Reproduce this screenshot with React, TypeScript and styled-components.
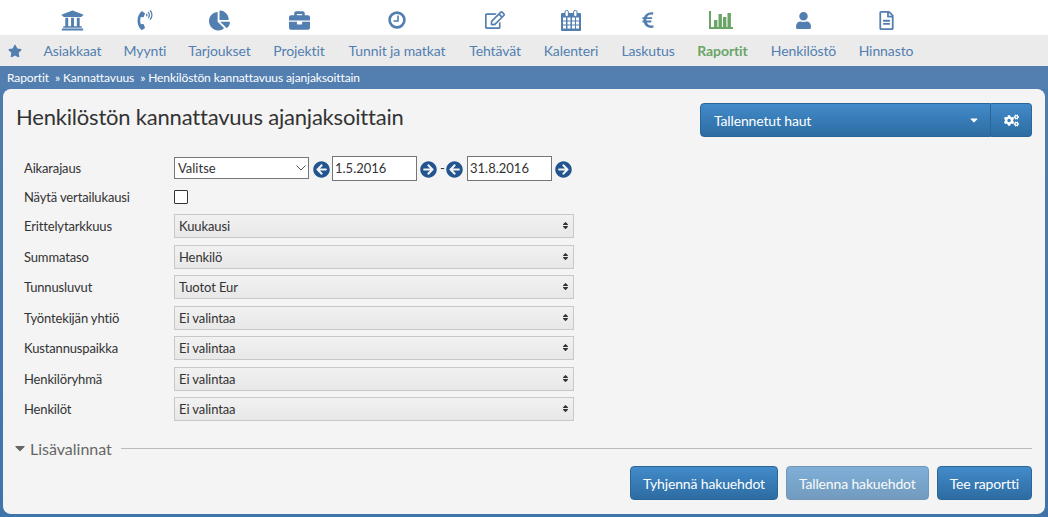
import React from "react";
import styled, { createGlobalStyle } from "styled-components";
import {
  FaUniversity,
  FaPhoneVolume,
  FaChartPie,
  FaBriefcase,
  FaRegEdit,
  FaEuroSign,
  FaUser,
  FaRegFileAlt,
  FaStar,
  FaCogs,
  FaArrowCircleLeft,
  FaArrowCircleRight,
  FaSortUp,
  FaSortDown,
  FaCaretDown,
} from "react-icons/fa";

const FONT = `"Lato", "Noto Sans", sans-serif`;

const GlobalStyle = createGlobalStyle`
  html, body {
    margin: 0;
    padding: 0;
    background: #4f7fb2;
    font-family: ${FONT};
    overflow: hidden;
  }
  * {
    box-sizing: border-box;
  }
`;

const Page = styled.div`
  width: 1048px;
  height: 517px;
  display: flex;
  flex-direction: column;
  background: linear-gradient(#527eb0, #3f74aa);
`;

const Nav = styled.nav`
  display: flex;
  height: 66px;
  background: #fff;
`;

const StarCell = styled.div`
  width: 32px;
  display: flex;
  flex-direction: column;
  justify-content: flex-end;
`;

const StarBox = styled.div`
  height: 31px;
  background: #ebebeb;
  color: #527eb0;
  font-size: 14px;
  display: flex;
  align-items: center;
  padding-left: 8px;
`;

const NavItem = styled.a<{ $width: number }>`
  width: ${(props) => props.$width}px;
  display: flex;
  flex-direction: column;
  align-items: stretch;
  color: #527eb0;
`;

const NavIcon = styled.div<{ $size?: number }>`
  height: 35px;
  display: flex;
  align-items: center;
  justify-content: center;
  font-size: ${(props) => props.$size ?? 21}px;
  padding-top: 5px;
`;

const NavLabel = styled.div<{ $active?: boolean }>`
  height: 31px;
  background: #ebebeb;
  display: flex;
  align-items: center;
  justify-content: center;
  font-size: 14px;
  letter-spacing: -0.1px;
  white-space: nowrap;
  font-weight: ${(props) => (props.$active ? 700 : 400)};
  color: ${(props) => (props.$active ? "#6aa568" : "#527eb0")};
`;

const NavFiller = styled.div`
  flex: 1;
  margin-top: 35px;
  background: #ebebeb;
`;

const Breadcrumb = styled.div`
  height: 23px;
  background: #527eb0;
  color: #fff;
  font-size: 12px;
  letter-spacing: -0.1px;
  display: flex;
  align-items: center;
  padding-left: 7px;
  white-space: nowrap;
`;

const Crumb = styled.span`
  margin-right: 6px;
`;

const Panel = styled.main`
  flex: none;
  height: 425px;
  margin: 0 3px;
  background: #f4f4f4;
  border-radius: 8px;
  padding: 0 13px;
  display: flex;
  flex-direction: column;
`;

const Header = styled.div`
  display: flex;
  justify-content: space-between;
  align-items: flex-start;
  height: 66px;
  padding-top: 14px;
`;

const Title = styled.h1`
  margin: -1px 0 0;
  font-size: 22px;
  font-weight: 400;
  line-height: 30px;
  letter-spacing: -0.2px;
  color: #333;
`;

const SavedSearches = styled.div`
  display: flex;
  width: 332px;
  height: 34px;
`;

const BlueButton = styled.button<{ $disabled?: boolean }>`
  height: 34px;
  padding: 0 12px;
  border: 1px solid #2b6699;
  border-radius: 4px;
  background: linear-gradient(#428bca, #2d6ca2);
  color: #fff;
  font-family: ${FONT};
  font-size: 14px;
  letter-spacing: -0.15px;
  opacity: ${(props) => (props.$disabled ? 0.65 : 1)};
  display: flex;
  align-items: center;
`;

const SavedMain = styled(BlueButton)`
  flex: 1;
  justify-content: space-between;
  border-radius: 4px 0 0 4px;
  padding: 0 13px;
`;

const SavedGear = styled(BlueButton)`
  width: 41px;
  justify-content: center;
  border-left: none;
  border-radius: 0 4px 4px 0;
  font-size: 15px;
  padding: 0;
`;

const Form = styled.div`
  padding-left: 8px;
  display: flex;
  flex-direction: column;
`;

const Row = styled.div<{ $height: number; $top?: number }>`
  display: flex;
  align-items: center;
  height: ${(props) => props.$height}px;
  padding-top: ${(props) => props.$top ?? 0}px;
`;

const Label = styled.label`
  width: 150px;
  flex: none;
  font-size: 13px;
  letter-spacing: -0.15px;
  color: #333;
`;

const SelectWrap = styled.div`
  position: relative;
  width: 135px;
  height: 22px;
  margin-top: -1px;
  svg {
    position: absolute;
    right: 3px;
    top: 8px;
    pointer-events: none;
  }
`;

const PlainSelect = styled.select`
  width: 100%;
  height: 100%;
  appearance: none;
  border: 1px solid #767676;
  border-radius: 0;
  background: #fff;
  font-family: ${FONT};
  font-size: 13px;
  color: #333;
  padding: 0 0 0 3px;
`;

const DateInput = styled.input`
  width: 85px;
  height: 25px;
  border: 1px solid #767676;
  background: #fff;
  font-family: ${FONT};
  font-size: 13px;
  color: #333;
  padding: 0 2px;
`;

const ArrowBtn = styled.span<{ $left: number; $right: number }>`
  display: inline-flex;
  color: #22558f;
  font-size: 17px;
  margin: 0 ${(props) => props.$right}px 0 ${(props) => props.$left}px;
  padding-top: 3px;
`;

const Dash = styled.span`
  font-size: 13px;
  color: #333;
  width: 2px;
`;

const Check = styled.input`
  width: 14px;
  height: 14px;
  margin: 0;
  appearance: none;
  border: 1px solid #333;
  background: #fff;
  border-radius: 1px;
`;

const FancySelect = styled.div`
  width: 400px;
  height: 24px;
  border: 1px solid #c8c8c8;
  background: linear-gradient(#f1f1f1, #e8e8e8);
  font-size: 13px;
  letter-spacing: -0.1px;
  color: #333;
  display: flex;
  align-items: center;
  justify-content: space-between;
  padding: 0 5px 0 4px;
`;

const SortMark = styled.span`
  position: relative;
  width: 7px;
  height: 10px;
  font-size: 9px;
  color: #333;
  svg {
    position: absolute;
    left: 0;
    top: 0;
  }
`;

const Divider = styled.div`
  display: flex;
  align-items: center;
  margin: 11.5px 0 0 -4px;
  height: 24px;
  color: #666;
  font-size: 16px;
`;

const DividerText = styled.span`
  display: flex;
  align-items: center;
  gap: 2px;
  margin-right: 9px;
`;

const DividerLine = styled.div`
  flex: 1;
  height: 1px;
  background: #bbb;
`;

const Actions = styled.div`
  display: flex;
  justify-content: flex-end;
  gap: 8px;
  margin-top: 6px;
`;

function ClockIcon() {
  return (
    <svg width="18" height="18" viewBox="0 0 18 18">
      <circle cx="9" cy="9" r="7.4" fill="none" stroke="#527eb0" strokeWidth="2.6" />
      <path d="M10 4.5V10H5.5" fill="none" stroke="#527eb0" strokeWidth="1.6" />
    </svg>
  );
}

function CalendarIcon() {
  const cols = [2, 6.5, 11, 15];
  const rowsY = [7.5, 11.5, 15.5];
  return (
    <svg width="20" height="21" viewBox="0 0 20 21">
      <rect x="0" y="3" width="20" height="18" rx="1" fill="#527eb0" />
      <rect x="4" y="0.5" width="3.4" height="6" rx="1.4" fill="#fff" stroke="#527eb0" />
      <rect x="12.6" y="0.5" width="3.4" height="6" rx="1.4" fill="#fff" stroke="#527eb0" />
      {rowsY.map((y) =>
        cols.map((x) => (
          <rect key={`${x}-${y}`} x={x} y={y} width="3" height="3" fill="#fff" />
        ))
      )}
    </svg>
  );
}

function BarsIcon() {
  return (
    <svg width="24" height="18" viewBox="0 0 24 18" style={{ marginLeft: -3 }}>
      <path d="M1 0v17h23" fill="none" stroke="#6aa568" strokeWidth="2" />
      <rect x="5" y="9" width="3.4" height="7" fill="#6aa568" />
      <rect x="9.5" y="3" width="3.4" height="13" fill="#6aa568" />
      <rect x="14" y="6" width="3.4" height="10" fill="#6aa568" />
      <rect x="18.5" y="2" width="3.4" height="14" fill="#6aa568" />
    </svg>
  );
}

const navItems = [
  { label: "Asiakkaat", width: 81, icon: <FaUniversity />, size: 23 },
  { label: "Myynti", width: 64, icon: <FaPhoneVolume />, size: 20 },
  { label: "Tarjoukset", width: 85, icon: <FaChartPie />, size: 21 },
  { label: "Projektit", width: 74, icon: <FaBriefcase />, size: 21 },
  { label: "Tunnit ja matkat", width: 122, icon: <ClockIcon /> },
  { label: "Tehtävät", width: 74, icon: <FaRegEdit />, size: 20 },
  { label: "Kalenteri", width: 78, icon: <CalendarIcon /> },
  { label: "Laskutus", width: 76, icon: <FaEuroSign />, size: 18 },
  { label: "Raportit", width: 73, icon: <BarsIcon />, active: true },
  { label: "Henkilöstö", width: 89, icon: <FaUser />, size: 17 },
  { label: "Hinnasto", width: 76, icon: <FaRegFileAlt />, size: 19 },
];

const rows = [
  { label: "Erittelytarkkuus", value: "Kuukausi" },
  { label: "Summataso", value: "Henkilö" },
  { label: "Tunnusluvut", value: "Tuotot Eur" },
  { label: "Työntekijän yhtiö", value: "Ei valintaa" },
  { label: "Kustannuspaikka", value: "Ei valintaa" },
  { label: "Henkilöryhmä", value: "Ei valintaa" },
  { label: "Henkilöt", value: "Ei valintaa" },
];

export default function App() {
  return (
    <Page>
      <GlobalStyle />
      <Nav>
        <StarCell>
          <StarBox>
            <FaStar />
          </StarBox>
        </StarCell>
        {navItems.map((item) => (
          <NavItem key={item.label} $width={item.width}>
            <NavIcon $size={item.size}>{item.icon}</NavIcon>
            <NavLabel $active={item.active}>{item.label}</NavLabel>
          </NavItem>
        ))}
        <NavFiller />
      </Nav>
      <Breadcrumb>
        <Crumb>Raportit</Crumb>
        <Crumb>» Kannattavuus</Crumb>
        <Crumb>» Henkilöstön kannattavuus ajanjaksoittain</Crumb>
      </Breadcrumb>
      <Panel>
        <Header>
          <Title>Henkilöstön kannattavuus ajanjaksoittain</Title>
          <SavedSearches>
            <SavedMain>
              Tallennetut haut
              <FaCaretDown style={{ fontSize: 12, marginRight: -3 }} />
            </SavedMain>
            <SavedGear>
              <FaCogs />
            </SavedGear>
          </SavedSearches>
        </Header>
        <Form>
          <Row $height={26}>
            <Label>Aikarajaus</Label>
            <SelectWrap>
              <PlainSelect defaultValue="Valitse">
                <option>Valitse</option>
              </PlainSelect>
              <svg width="10" height="6" viewBox="0 0 10 6">
                <path d="M0.5 0.5L5 5L9.5 0.5" fill="none" stroke="#555" strokeWidth="1" />
              </svg>
            </SelectWrap>
            <ArrowBtn $left={4} $right={2}>
              <FaArrowCircleLeft />
            </ArrowBtn>
            <DateInput defaultValue="1.5.2016" />
            <ArrowBtn $left={3} $right={3}>
              <FaArrowCircleRight />
            </ArrowBtn>
            <Dash>-</Dash>
            <ArrowBtn $left={4} $right={4}>
              <FaArrowCircleLeft />
            </ArrowBtn>
            <DateInput defaultValue="31.8.2016" />
            <ArrowBtn $left={3} $right={0}>
              <FaArrowCircleRight />
            </ArrowBtn>
          </Row>
          <Row $height={29.7} $top={2}>
            <Label>Näytä vertailukausi</Label>
            <Check type="checkbox" />
          </Row>
          {rows.map((row) => (
            <Row key={row.label} $height={30.55}>
              <Label>{row.label}</Label>
              <FancySelect>
                {row.value}
                <SortMark>
                  <FaSortUp />
                  <FaSortDown />
                </SortMark>
              </FancySelect>
            </Row>
          ))}
        </Form>
        <Divider>
          <DividerText>
            <FaCaretDown style={{ fontSize: 16 }} />
            Lisävalinnat
          </DividerText>
          <DividerLine />
        </Divider>
        <Actions>
          <BlueButton>Tyhjennä hakuehdot</BlueButton>
          <BlueButton $disabled>Tallenna hakuehdot</BlueButton>
          <BlueButton>Tee raportti</BlueButton>
        </Actions>
      </Panel>
    </Page>
  );
}
